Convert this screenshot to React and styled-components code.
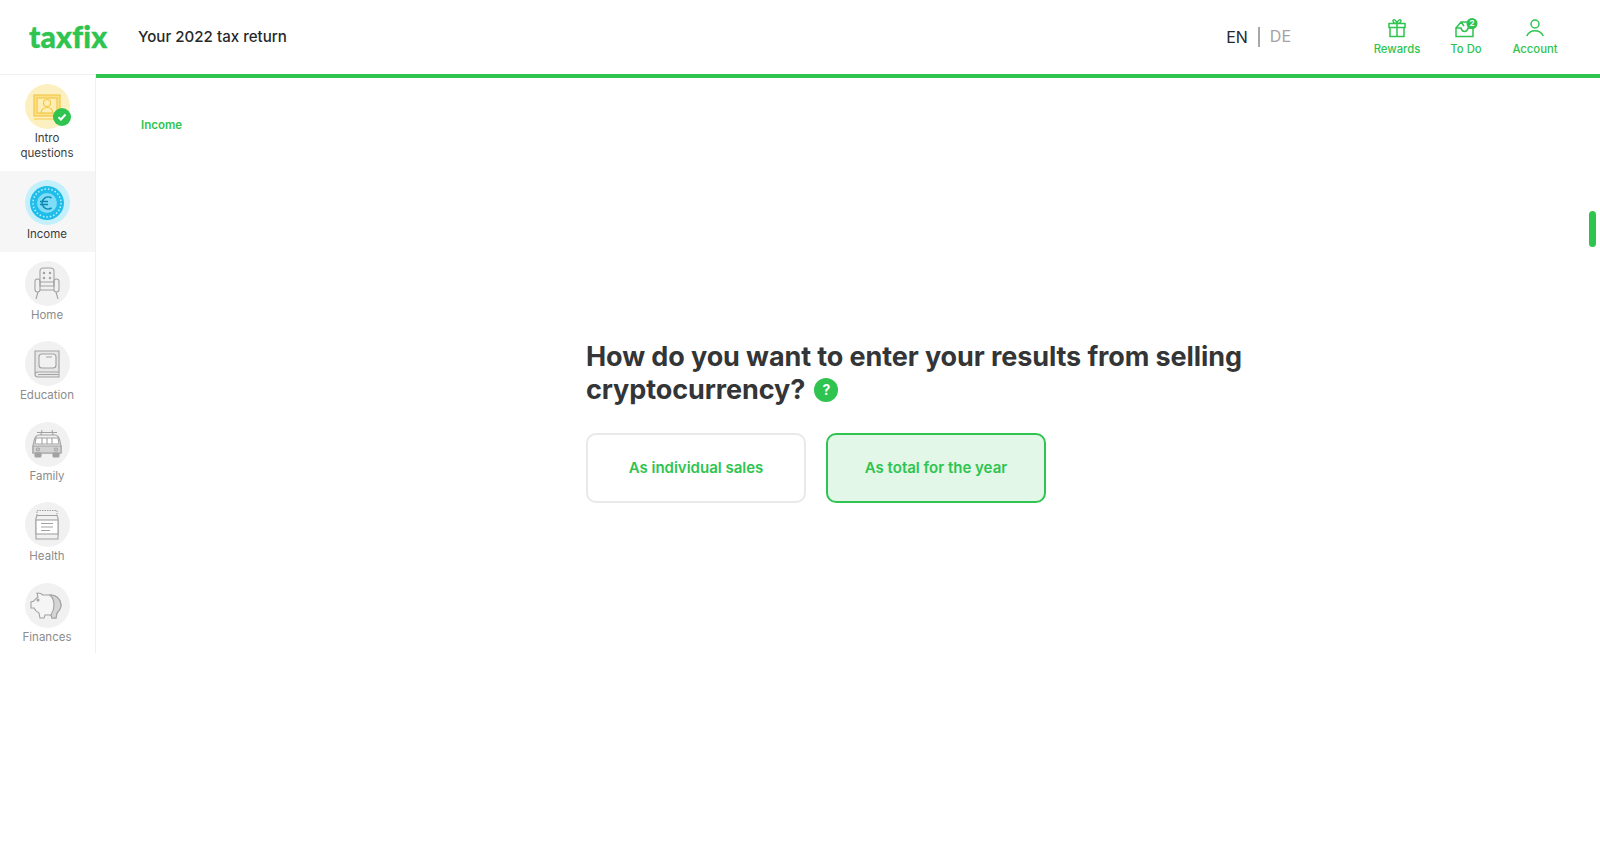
import React from 'react';
import styled, { createGlobalStyle } from 'styled-components';

const green = '#2ec44f';
const font = 'Inter, "Noto Sans", sans-serif';

const GlobalStyle = createGlobalStyle`
  html, body {
    margin: 0;
    padding: 0;
    background: #fff;
    font-family: ${font};
  }
`;

const Page = styled.div`
  position: relative;
  width: 1600px;
  height: 848px;
  overflow: hidden;
`;

const Header = styled.header`
  display: flex;
  align-items: center;
  height: 74px;
  padding-left: 29px;
`;

const Logo = styled.div`
  width: 109px;
  margin-top: -3px;
  font-family: Lato, sans-serif;
  font-size: 30px;
  font-weight: 900;
  letter-spacing: 0.2px;
  line-height: 1;
  color: ${green};
  -webkit-text-stroke: 0.4px ${green};
`;

const Title = styled.div`
  margin-top: -1px;
  font-size: 15.1px;
  font-weight: 500;
  color: #26282a;
`;

const Lang = styled.div`
  display: flex;
  align-items: center;
  margin-top: -1px;
  margin-left: auto;
  font-size: 16px;
  color: ${p => (p.$muted ? '#a3a3a3' : '#26282a')};
`;

const LangDivider = styled.span`
  width: 2px;
  height: 20px;
  margin: 0 10px;
  background: #a8a8a8;
`;

const HeaderNav = styled.nav`
  display: flex;
  gap: 9px;
  margin: 0 35px 0 76px;
`;

const NavItem = styled.div`
  display: flex;
  flex-direction: column;
  align-items: center;
  gap: 4px;
  width: 60px;
  font-size: 11.3px;
  font-weight: 500;
  color: ${green};
`;

const Body = styled.div`
  display: flex;
  align-items: flex-start;
`;

const Sidebar = styled.aside`
  flex: none;
  width: 96px;
  height: 579px;
  box-sizing: border-box;
  border-top: 1px solid #f0f0f0;
  border-right: 1px solid #f0f0f0;
`;

const SideItem = styled.div`
  display: flex;
  flex-direction: column;
  align-items: center;
  height: ${p => (p.$tall ? '96px' : '80.6px')};
  padding: 9px 1px 0 0;
  box-sizing: border-box;
  background: ${p => (p.$active ? '#f6f6f6' : 'transparent')};
  color: ${p => (p.$done || p.$active ? '#3a3c3e' : '#8c8c8c')};
  font-size: 11.5px;
  line-height: 15px;
  text-align: center;
`;

const Bubble = styled.div`
  position: relative;
  display: flex;
  align-items: center;
  justify-content: center;
  width: 45px;
  height: 45px;
  margin-bottom: 2px;
  border-radius: 50%;
  background: ${p => p.$bg || '#f1f1f1'};
`;

const DoneBadge = styled.span`
  position: absolute;
  right: -1px;
  bottom: 3px;
  display: flex;
  align-items: center;
  justify-content: center;
  width: 18px;
  height: 18px;
  border-radius: 50%;
  background: ${green};
`;

const Main = styled.main`
  flex: 1;
  height: 774px;
  border-top: 4px solid ${green};
  padding: 39px 0 0 45px;
  box-sizing: border-box;
`;

const Crumb = styled.div`
  font-size: 11.5px;
  font-weight: 600;
  line-height: 16px;
  color: ${green};
`;

const Question = styled.section`
  width: 680px;
  margin: 208px 0 0 445px;
`;

const Heading = styled.h1`
  margin: 0 0 27px;
  font-size: 27px;
  font-weight: 700;
  letter-spacing: -0.1px;
  line-height: 32.5px;
  color: #333537;
`;

const HelpDot = styled.span`
  display: inline-flex;
  align-items: center;
  justify-content: center;
  width: 24px;
  height: 24px;
  margin-left: 3px;
  vertical-align: 4px;
  border-radius: 50%;
  background: ${green};
  color: #fff;
  font-size: 14px;
  font-weight: 700;
  line-height: 1;
`;

const Options = styled.div`
  display: flex;
  gap: 20px;
`;

const Option = styled.button`
  width: 220px;
  height: 70px;
  padding-bottom: 3px;
  box-sizing: border-box;
  border: 2px solid ${p => (p.$selected ? green : '#e9e9e9')};
  border-radius: 10px;
  background: ${p => (p.$selected ? '#e2f7e7' : '#fff')};
  color: ${green};
  font-family: ${font};
  font-size: 15px;
  font-weight: 600;
`;

const ScrollMark = styled.div`
  position: absolute;
  top: 211px;
  right: 4px;
  width: 7px;
  height: 36px;
  border-radius: 4px;
  background: ${green};
`;

const GiftIcon = () => (
  <svg width="18" height="20" viewBox="0 0 18 20" fill="none" stroke={green} strokeWidth="1.5">
    <path d="M2 9.500h14v9H2zM1 5.500h16v4H1zM9 5.500v13M9 5.500C7 5.500 4.800 4.500 5 2.700c.2-1.600 3-1.400 4 2.800 1-4.200 3.800-4.400 4-2.800.2 1.800-2 2.800-4 2.800z" />
  </svg>
);

const TodoIcon = () => (
  <svg width="24" height="20" viewBox="0 0 24 20">
    <path d="M2 10l5-6h8M2 10v8.500h17V10h-5c-.5 2.400-2 3.400-3.500 3.400S7.500 12.400 7 10zM7 4l3 4" fill="none" stroke={green} strokeWidth="1.5" />
    <circle cx="18" cy="5.500" r="5.500" fill={green} />
    <text x="18" y="8.300" textAnchor="middle" fontFamily="Inter, sans-serif" fontSize="8" fontWeight="700" fill="#fff">2</text>
  </svg>
);

const AccountIcon = () => (
  <svg width="20" height="20" viewBox="0 0 20 20" fill="none" stroke={green} strokeWidth="1.5">
    <circle cx="10" cy="6" r="4" />
    <path d="M1.800 18c1.600-3.600 4.500-5.200 8.200-5.200s6.600 1.600 8.200 5.200" />
  </svg>
);

const grey = '#a2a2a2';

const ScreenIcon = () => (
  <svg width="30" height="30" viewBox="0 0 30 30" fill="none" stroke="#f3c94a" strokeWidth="1.200">
    <rect x="2" y="3" width="26" height="21" fill="#fbe08a" />
    <rect x="5" y="6" width="20" height="15" fill="#fdeeb5" />
    <circle cx="15" cy="11" r="3.500" />
    <path d="M9 21c.5-4 3-5.500 6-5.500s5.500 1.500 6 5.500M2 27h20" />
  </svg>
);

const CoinIcon = () => (
  <svg width="36" height="36" viewBox="0 0 36 36">
    <circle cx="18" cy="18" r="17" fill="#1fbdea" />
    <circle cx="18" cy="18" r="14" fill="none" stroke="#bdf0ff" strokeWidth="1.500" strokeDasharray="1.500 2" />
    <circle cx="18" cy="18" r="10" fill="#7fdcf6" />
    <path d="M22.500 13a6 6 0 1 0 0 10M11 16.500h8M11 19.500h8" fill="none" stroke="#0d86b0" strokeWidth="1.600" />
  </svg>
);

const ChairIcon = () => (
  <svg width="30" height="34" viewBox="0 0 30 34" fill="none" stroke={grey} strokeWidth="1.100">
    <path d="M8 16V5c0-2 2-3 4-3h6c2 0 4 1 4 3v11M8 20h14v-4H8z" />
    <rect x="3" y="13" width="5" height="13" rx="2.500" />
    <rect x="22" y="13" width="5" height="13" rx="2.500" />
    <path d="M8 24h14M6 26l-2 7M24 26l2 7" />
    <circle cx="12" cy="7" r=".7" />
    <circle cx="18" cy="7" r=".7" />
    <circle cx="12" cy="12" r=".7" />
    <circle cx="18" cy="12" r=".7" />
  </svg>
);

const BookIcon = () => (
  <svg width="30" height="32" viewBox="0 0 30 32" fill="none" stroke={grey} strokeWidth="1.100">
    <path d="M3 26V3h24v21H6c-2 0-3 1-3 2.500S4 29 6 29h21v-5" fill="#e6e6e6" />
    <rect x="7" y="6" width="17" height="14" rx="3" fill="#f1f1f1" />
    <path d="M14 9h6M6 26.500h20" />
  </svg>
);

const VanIcon = () => (
  <svg width="34" height="30" viewBox="0 0 34 30" fill="none" stroke={grey} strokeWidth="1.100">
    <path d="M7 3.500h20M12 1l-1 5M22 1l1 5" />
    <path d="M9 6h16c3 0 4 2 5 6l1 5v7H3v-7l1-5c1-4 2-6 5-6z" fill="#f1f1f1" />
    <path d="M3 17h28v7H3z" fill="#d2d2d2" />
    <path d="M5 15l1-6h22l1 6zM12 9v6M17 9v6M22 9v6" fill="#fff" />
    <circle cx="8" cy="20.500" r="1.500" />
    <circle cx="26" cy="20.500" r="1.500" />
    <rect x="5" y="24" width="6" height="4" rx="1" fill="#a2a2a2" />
    <rect x="23" y="24" width="6" height="4" rx="1" fill="#a2a2a2" />
  </svg>
);

const JarIcon = () => (
  <svg width="26" height="32" viewBox="0 0 26 32" fill="none" stroke={grey} strokeWidth="1.100">
    <rect x="3" y="1.500" width="20" height="5" strokeDasharray="1.500 1" />
    <path d="M3 6.500h20l1 2.500v21H2V9z" />
    <rect x="2" y="11" width="22" height="14" fill="#fff" />
    <path d="M7 14.500h12M7 18h12M7 21.500h9" />
  </svg>
);

const PigIcon = () => (
  <svg width="36" height="30" viewBox="0 0 36 30" fill="none" stroke={grey} strokeWidth="1.100">
    <path d="M21 5c7 0 11 5 11 10 0 4-2 6-4 8l-1 5h-4l-1-3h-6l-1 3h-4l-1-5c-2-1-4-3-5-5H2v-6l3-1c1-2 3-3 4-4L8 3c3 0 5 1 6 2z" fill="#f5f5f5" />
    <path d="M21 5c7 0 11 5 11 10 0 4-2 6-4 8l-1 5h-4l-1-3c2-3 3-5 3-10 0-4-2-8-4-10z" fill="#d4d4d4" />
    <circle cx="9" cy="10" r="1" fill={grey} />
  </svg>
);

const sections = [
  { label: 'Home', icon: <ChairIcon /> },
  { label: 'Education', icon: <BookIcon /> },
  { label: 'Family', icon: <VanIcon /> },
  { label: 'Health', icon: <JarIcon /> },
  { label: 'Finances', icon: <PigIcon /> }
];

function App() {
  return (
    <Page>
      <GlobalStyle />
      <Header>
        <Logo>taxfix</Logo>
        <Title>Your 2022 tax return</Title>
        <Lang>
          EN
          <LangDivider />
          <Lang as="span" $muted>DE</Lang>
        </Lang>
        <HeaderNav>
          <NavItem><GiftIcon />Rewards</NavItem>
          <NavItem><TodoIcon />To Do</NavItem>
          <NavItem><AccountIcon />Account</NavItem>
        </HeaderNav>
      </Header>
      <Body>
        <Sidebar>
          <SideItem $tall $done>
            <Bubble $bg="#fdf0c0">
              <ScreenIcon />
              <DoneBadge>
                <svg width="10" height="10" viewBox="0 0 10 10" fill="none" stroke="#fff" strokeWidth="2">
                  <path d="M1.500 5.200l2.400 2.300 4.600-5" />
                </svg>
              </DoneBadge>
            </Bubble>
            Intro<br />questions
          </SideItem>
          <SideItem $active>
            <Bubble $bg="#c4f0fc"><CoinIcon /></Bubble>
            Income
          </SideItem>
          {sections.map(s => (
            <SideItem key={s.label}>
              <Bubble>{s.icon}</Bubble>
              {s.label}
            </SideItem>
          ))}
        </Sidebar>
        <Main>
          <Crumb>Income</Crumb>
          <Question>
            <Heading>
              How do you want to enter your results from selling cryptocurrency? <HelpDot>?</HelpDot>
            </Heading>
            <Options>
              <Option>As individual sales</Option>
              <Option $selected>As total for the year</Option>
            </Options>
          </Question>
        </Main>
      </Body>
      <ScrollMark />
    </Page>
  );
}

export default App;
